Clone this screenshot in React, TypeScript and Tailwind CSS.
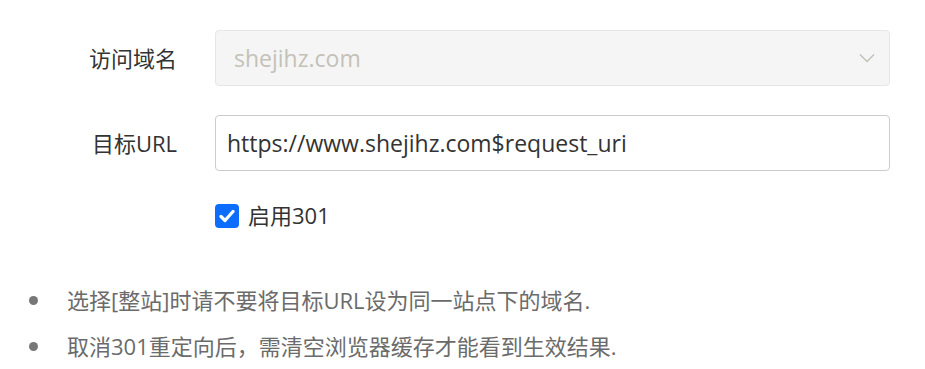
import React, { useState } from 'react';

const font = { fontFamily: '"Open Sans", "Noto Sans CJK SC", sans-serif' };

const App: React.FC = () => {
  const [checked, setChecked] = useState(true);
  const [url, setUrl] = useState('https://www.shejihz.com$request_uri');

  return (
    <div className="w-[925px] h-[369px] bg-white text-[#333] font-['Open_Sans','Noto_Sans_CJK_SC',sans-serif]">
      <div className="pt-[30px]">
        {/* 访问域名 */}
        <div className="flex items-center h-[56px]">
          <label className="w-[177px] text-right text-[22px] text-[#333]">访问域名</label>
          <div className="ml-[38px] w-[675px] h-full flex items-center justify-between px-[18px] bg-[#f5f5f5] border border-[#e6e6e6] rounded-[4px]">
            <span className="text-[23px] text-[#c4c1b8]">shejihz.com</span>
            <svg width="16" height="10" viewBox="0 0 16 10" className="mr-[-4px]">
              <path d="M1 1.5 L8 8.5 L15 1.5" fill="none" stroke="#c4c1b8" strokeWidth="1.5" />
            </svg>
          </div>
        </div>

        {/* 目标URL */}
        <div className="flex items-center h-[56px] mt-[29px]">
          <label className="w-[177px] text-right text-[22px] text-[#333]">目标URL</label>
          <input
            value={url}
            onChange={e => setUrl(e.target.value)}
            style={font}
            className="ml-[38px] w-[675px] h-full px-[11px] text-[23px] text-[#333] bg-white border border-[#ccc] rounded-[4px] outline-none"
          />
        </div>

        {/* 启用301 */}
        <div className="flex items-center mt-[28px] ml-[215px]">
          <button
            onClick={() => setChecked(!checked)}
            className={`w-[24px] h-[24px] rounded-[4px] flex items-center justify-center ${checked ? 'bg-[#0d6efd]' : 'bg-white border border-[#ccc]'}`}
          >
            {checked && (
              <svg width="16" height="14" viewBox="0 0 16 14">
                <path d="M2 7.5 L6 11.5 L14 2.5" fill="none" stroke="#fff" strokeWidth="3.2" strokeLinecap="round" strokeLinejoin="round" />
              </svg>
            )}
          </button>
          <span className="ml-[9px] text-[22px] text-[#333]">启用301</span>
        </div>
      </div>

      <ul className="mt-[52px] pl-[29px] text-[22px] text-[#6b6b6b] flex flex-col gap-[13px]">
        <li className="flex items-center">
          <span className="w-[9px] h-[9px] rounded-full bg-[#777]" />
          <span className="ml-[29px]">选择[整站]时请不要将目标URL设为同一站点下的域名.</span>
        </li>
        <li className="flex items-center">
          <span className="w-[9px] h-[9px] rounded-full bg-[#777]" />
          <span className="ml-[29px]">取消301重定向后，需清空浏览器缓存才能看到生效结果.</span>
        </li>
      </ul>
    </div>
  );
};

export default App;
